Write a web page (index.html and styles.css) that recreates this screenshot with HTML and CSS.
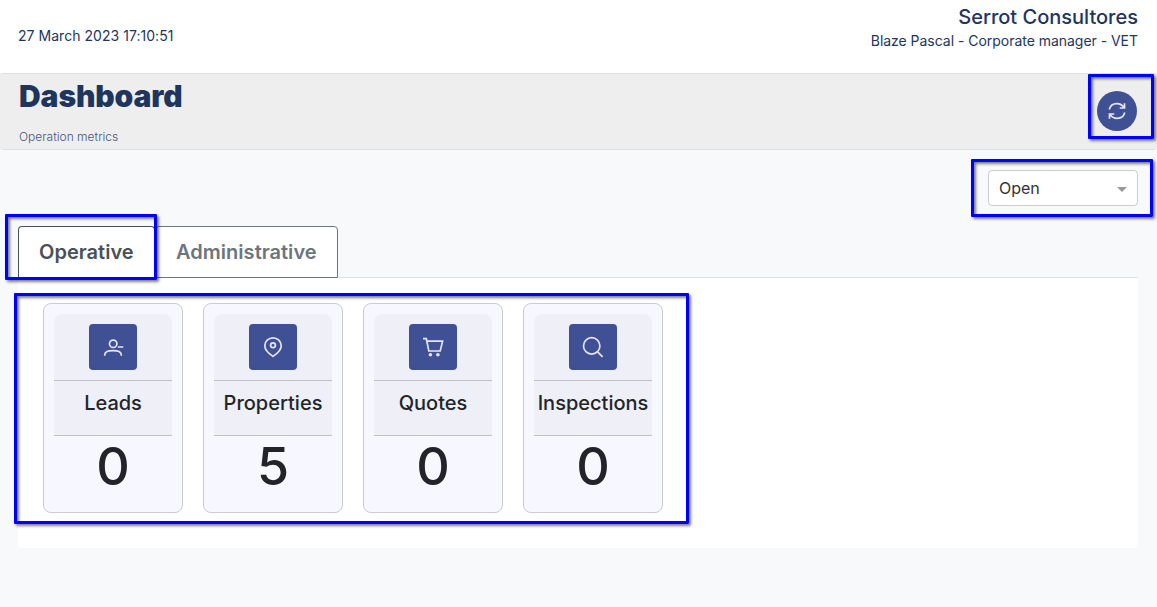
FILE: index.html
```html
<!DOCTYPE html>
<html lang="en">
<head>
<meta charset="utf-8">
<title>Dashboard</title>
<link rel="stylesheet" href="styles.css">
</head>
<body>
<header class="topbar">
  <div class="date">27 March 2023 17:10:51</div>
  <div class="account">
    <div class="company">Serrot Consultores</div>
    <div class="user">Blaze Pascal - Corporate manager - VET</div>
  </div>
</header>
<section class="heading">
  <div>
    <h1 class="title">Dashboard</h1>
    <p class="subtitle">Operation metrics</p>
  </div>
  <button class="refresh" aria-label="Refresh">
    <svg width="20" height="20" viewBox="0 0 20 20"><path d="M2.200 8.400C3.200 4.900 6.200 2.600 9.800 2.600c3 0 5.600 1.400 7.200 4M17.500 2.200v4.800h-4.800M17.800 11.600c-1 3.500-4 5.800-7.600 5.800-3 0-5.600-1.400-7.200-4M2.500 17.800V13h4.800"/></svg>
  </button>
</section>
<main class="content">
  <div class="filter">
    <div class="select"><span>Open</span><i class="caret"></i></div>
  </div>
  <nav class="tabs">
    <a class="tab tab-active">Operative</a>
    <a class="tab tab-last">Administrative</a>
  </nav>
  <section class="panel">
    <article class="card">
      <div class="card-icon"><span class="badge"><svg width="20" height="20" viewBox="0 0 20 20"><circle cx="10.200" cy="6.800" r="3.700"/><path d="M1.700 18.700v-.8c0-2.800 3.600-4.300 8.300-4.300s8.300 1.500 8.300 4.300v.8M14.900 10h5.400"/></svg></span></div>
      <div class="card-name">Leads</div>
      <div class="card-value">0</div>
    </article>
    <article class="card">
      <div class="card-icon"><span class="badge"><svg width="20" height="20" viewBox="0 0 20 20"><path d="M10 .8c-4.600 0-8.200 3.500-8.200 8 0 4.600 4.200 8 8.200 10.600 4-2.600 8.200-6 8.200-10.600 0-4.500-3.600-8-8.200-8z"/><circle cx="10" cy="8.300" r="2.400"/></svg></span></div>
      <div class="card-name">Properties</div>
      <div class="card-value">5</div>
    </article>
    <article class="card">
      <div class="card-icon"><span class="badge"><svg width="20" height="20" viewBox="0 0 20 20"><path d="M0 1.700h3.300L5.800 14h11.400L19.600 4.200H4"/><circle class="wheel" cx="7.400" cy="17.700" r="1.800"/><circle class="wheel" cx="14.900" cy="17.700" r="1.800"/></svg></span></div>
      <div class="card-name">Quotes</div>
      <div class="card-value">0</div>
    </article>
    <article class="card">
      <div class="card-icon"><span class="badge"><svg width="20" height="20" viewBox="0 0 20 20"><circle cx="8.700" cy="8.900" r="8.200"/><path d="M14.600 14.800l5 5"/></svg></span></div>
      <div class="card-name">Inspections</div>
      <div class="card-value">0</div>
    </article>
  </section>
</main>
<div class="callout callout-refresh"></div>
<div class="callout callout-filter"></div>
<div class="callout callout-tab"></div>
<div class="callout callout-cards"></div>
</body>
</html>
```
FILE: styles.css
```css
* { box-sizing: border-box; }
body {
  margin: 0;
  height: 607px;
  position: relative;
  overflow: hidden;
  background: #f8f9fb;
  color: #212529;
  font-family: Inter, "Liberation Sans", sans-serif;
}
svg { display: block; overflow: visible; fill: none; stroke: #e3e5f2; stroke-width: 1.700; }
.topbar {
  height: 73px;
  padding: 0 19px 0 18px;
  display: flex;
  justify-content: space-between;
  background: #fff;
  color: #1e355e;
  font-size: 14px;
  line-height: 20px;
}
.date { padding-top: 26px; letter-spacing: .04px; }
.account { padding-top: 5px; text-align: right; }
.company { font-size: 20px; font-weight: 500; line-height: 24px; }
.user { padding-top: 2px; letter-spacing: -.03px; }
.heading {
  height: 77px;
  padding: 0 19px;
  display: flex;
  justify-content: space-between;
  align-items: flex-start;
  background: #eee;
  border: solid #dee0e4;
  border-width: 1px 0;
  border-radius: 4px;
}
.title { margin: 0; padding-top: 4px; color: #1e355e; font-size: 30px; font-weight: 900; line-height: 36px; letter-spacing: -.1px; }
.subtitle { margin: 14px 0 0; color: #465580; font-size: 12px; font-weight: 300; line-height: 18px; }
.refresh {
  width: 40px;
  height: 40px;
  margin: 17px 1px 0 0;
  padding: 0;
  display: grid;
  place-items: center;
  border: 0;
  border-radius: 50%;
  background: #405095;
}
.content { padding: 20px 19px 0 18px; }
.filter { display: flex; justify-content: flex-end; }
.select {
  width: 150px;
  height: 36px;
  padding: 0 10px;
  display: flex;
  align-items: center;
  justify-content: space-between;
  background: #fff;
  border: 1px solid #ccc;
  border-radius: 4px;
  color: #333;
  font-size: 16px;
}
.caret { border: 5px solid transparent; border-top-color: #999; border-bottom: 0; margin-top: 2px; }
.tabs { display: flex; margin-top: 20px; height: 51px; }
.tab {
  position: relative;
  height: 52px;
  padding: 0 20px;
  background: #fff;
  border: 1px solid #6c757d;
  border-radius: 4px 4px 0 0;
  color: #6c757d;
  font-size: 20px;
  font-weight: 600;
  line-height: 50px;
  letter-spacing: .03px;
}
.tab-active { width: 137px; color: #495057; border-color: #495057 #495057 #fff; }
.tab-last { width: 183px; }
.panel {
  height: 271px;
  padding: 25px;
  display: flex;
  gap: 20px;
  align-items: flex-start;
  background: #fff;
  border-top: 1px solid #dee2e6;
  border-radius: 0 0 4px 4px;
}
.card {
  width: 140px;
  height: 210px;
  padding: 10px;
  background: #f6f7ff;
  border: 1px solid #cacbd0;
  border-radius: 8px;
  text-align: center;
}
.card-icon {
  height: 67px;
  padding-top: 10px;
  display: flex;
  justify-content: center;
  align-items: flex-start;
  background: #eeeff7;
  border-bottom: 1px solid #c0c1c6;
  border-radius: 8px 8px 0 0;
}
.badge { width: 48px; height: 46px; display: grid; place-items: center; background: #405095; border-radius: 4px; }
.wheel { fill: #e3e5f2; stroke: none; }
.card-name {
  height: 55px;
  padding-top: 10px;
  display: flex;
  justify-content: center;
  background: #eeeff7;
  border-bottom: 1px solid #c0c1c6;
  font-size: 20px;
  font-weight: 500;
  line-height: 24px;
}
.card-value { font-size: 52px; font-weight: 500; line-height: 62px; }
.callout {
  position: absolute;
  border: 3px solid #00f;
  border-radius: 1px;
  box-shadow: 2px 2px 3px rgba(0,0,0,.5), inset 2px 2px 3px rgba(0,0,0,.5);
  pointer-events: none;
}
.callout-refresh { left: 1088px; top: 74px; width: 66px; height: 65px; }
.callout-filter { left: 971px; top: 159px; width: 182px; height: 58px; }
.callout-tab { left: 5px; top: 214px; width: 152px; height: 66px; }
.callout-cards { left: 14px; top: 293px; width: 675px; height: 231px; }
```
